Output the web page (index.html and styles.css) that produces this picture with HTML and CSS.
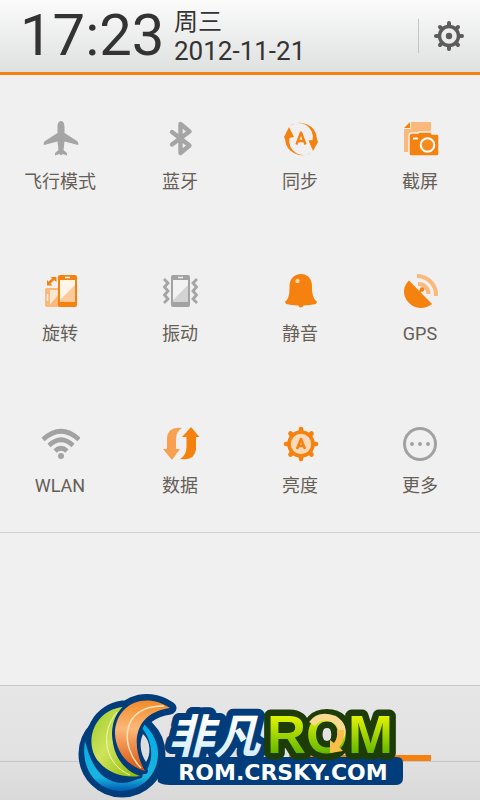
FILE: index.html
```html
<!DOCTYPE html>
<html lang="zh-CN">
<head>
    <meta charset="UTF-8">
    <meta name="viewport" content="width=device-width, initial-scale=1.0">
    <title>快捷开关</title>
    <link rel="stylesheet" href="styles.css">
</head>
<body>
    <!-- Clock bar -->
    <header class="header">
        <div class="clock">17:23</div>
        <div class="date">
            <div class="weekday">周三</div>
            <div class="day">2012-11-21</div>
        </div>
        <button class="settings" aria-label="设置">
            <svg width="30" height="30" viewBox="-15 -15 30 30">
                <g stroke="#5c5c5c" stroke-width="4" stroke-linecap="round">
                    <path d="M0-13V-10M0 13V10M-13 0H-10M13 0H10M-9-9L-7-7M9-9L7-7M-9 9L-7 7M9 9L7 7"/>
                </g>
                <circle r="9.5" fill="none" stroke="#5c5c5c" stroke-width="3.4"/>
                <circle r="3.2" fill="#5c5c5c"/>
            </svg>
        </button>
    </header>

    <!-- Toggles -->
    <main class="toggles">
        <button class="toggle">
            <svg class="icon" viewBox="0 0 40 40">
                <path fill="#a5a5a5" d="M21 2C23.500 2 24.500 5 24.500 8V14L37 22C38.500 23.500 38.700 25 38 26L24.500 22.500L23.500 31L27 34V36.500L22.500 35L21 36.500L19.500 35L15 36.500V34L18.500 31L17.500 22.500L4 26C3.300 25 3.500 23.500 5 22L17.500 14V8C17.500 5 18.500 2 21 2Z"/>
            </svg>
            <span>飞行模式</span>
        </button>
        <button class="toggle">
            <svg class="icon" viewBox="0 0 40 40">
                <path fill="none" stroke="#a5a5a5" stroke-width="4.400" stroke-linecap="round" stroke-linejoin="round" d="M12 13L29.500 26.500L20.500 34V5L29.500 12.500L12 25.500"/>
            </svg>
            <span>蓝牙</span>
        </button>
        <button class="toggle">
            <svg class="icon" viewBox="0 0 40 40">
                <g fill="#f5820f">
                    <path d="M9 8A17 17 0 0 1 37 20L38 23L33 32L28.500 21.500L32.500 21A14 14 0 0 0 9 8Z"/>
                    <path d="M33 32A17 17 0 0 1 5 20L4 18L9 8L14 18L9.500 19A14 14 0 0 0 33 32Z"/>
                </g>
                <path fill="none" stroke="#f5820f" stroke-width="2.400" stroke-linejoin="round" d="M16.500 25.500L21 13.500L25.500 25.500M18 22H24"/>
            </svg>
            <span>同步</span>
        </button>
        <button class="toggle">
            <svg class="icon" viewBox="0 0 40 40">
                <path fill="#fab87a" d="M11 3H31V14H10V33H4V10H11Z"/>
                <path fill="#f5820f" d="M4 9L10 3V9Z"/>
                <path fill="#f5820f" stroke="#f0f0f0" stroke-width="1.500" d="M9 17Q9 14 12 14H18L19 13H31L32 15H37Q39 15 39 17V35Q39 37 37 37H11Q9 37 9 35Z"/>
                <circle cx="27.500" cy="26" r="6.800" fill="#f68b20" stroke="#fff" stroke-width="2"/>
                <path stroke="#fff" stroke-width="2" d="M13 19.500H18"/>
            </svg>
            <span>截屏</span>
        </button>

        <button class="toggle">
            <svg class="icon" viewBox="0 0 40 40">
                <rect x="5" y="17" width="18" height="19" rx="2" fill="#fab87a"/>
                <path fill="#fde6d0" d="M10 19H18V34H10Z"/>
                <path fill="#fab87a" d="M18 24V34H10Z"/>
                <path stroke="#f0f0f0" stroke-width="1.500" d="M7.500 23V30"/>
                <path fill="none" stroke="#f5820f" stroke-width="2.600" d="M9 12L14 7.500"/>
                <path fill="#f5820f" d="M7 9V14.500H12.500ZM10.500 6H16.500V11Z"/>
                <rect x="18" y="4" width="19" height="32" rx="2" fill="#f5820f"/>
                <path fill="#fff4e8" d="M20 9H35V31H20Z"/>
                <path fill="#fbc99a" d="M35 14V31H20V29Z"/>
                <path stroke="#fff" stroke-width="1.500" d="M25 6.500H30"/>
            </svg>
            <span>旋转</span>
        </button>
        <button class="toggle">
            <svg class="icon" viewBox="0 0 40 40">
                <rect x="11" y="4" width="19" height="32" rx="2" fill="#a2a2a2"/>
                <path fill="#f2f2f2" d="M13 9H28V31H13Z"/>
                <path fill="#d3d3d3" d="M28 14V31H13V29Z"/>
                <path stroke="#eee" stroke-width="1.500" d="M18 6.500H23"/>
                <path fill="none" stroke="#a5a5a5" stroke-width="2.800" d="M4 8L8 12L4.500 16L8 20L4.500 24L8 28L4 32M37 8L33 12L36.500 16L33 20L36.500 24L33 28L37 32"/>
            </svg>
            <span>振动</span>
        </button>
        <button class="toggle">
            <svg class="icon" viewBox="0 0 40 40">
                <path fill="#f5820f" d="M21 3C28 3 32 8 32 15C32 23 33 28 37 30.500L36 33Q30 34 23.500 34.500Q23 36.500 20.500 36.500Q18.500 36.500 18.500 34.500Q11 34 6 33L5 30.500C9 28 9.500 23 9.500 15C9.500 8 14 3 21 3Z"/>
                <circle cx="17.500" cy="10" r="2.200" fill="#fbd3aa"/>
            </svg>
            <span>静音</span>
        </button>
        <button class="toggle">
            <svg class="icon" viewBox="0 0 40 40">
                <path fill="none" stroke="#fab87a" stroke-width="4" d="M17 5A19 19 0 0 1 36 25M18 13A10 10 0 0 1 28.500 23"/>
                <path fill="#f5820f" d="M9 9.500L32 33C24 39 14 38 8 31C2 24 3 15 9 9.500Z"/>
                <path stroke="#f5820f" stroke-width="2" d="M18 22L22 18.500"/>
                <circle cx="22" cy="18.500" r="2.200" fill="#f5820f"/>
            </svg>
            <span>GPS</span>
        </button>

        <button class="toggle">
            <svg class="icon" viewBox="0 0 40 40">
                <g fill="none" stroke="#a2a2a2" stroke-width="4.600">
                    <path d="M3 16.500Q21 0 39 16.500"/>
                    <path d="M9 22.500Q21 11 33 22.500"/>
                    <path d="M15 28Q21 22.500 27 28"/>
                </g>
                <circle cx="21" cy="33" r="3" fill="#a2a2a2"/>
            </svg>
            <span>WLAN</span>
        </button>
        <button class="toggle">
            <svg class="icon" viewBox="0 0 40 40">
                <path fill="#f8a050" d="M22 5Q8 3 7 15V26H3L12 37L20 26H16V17Q16 8 22 5Z"/>
                <path fill="#f5820f" d="M20 36Q35 38 36 26V14H39.500L31 4L22 14H26.500V24Q26.500 32 20 36Z"/>
            </svg>
            <span>数据</span>
        </button>
        <button class="toggle">
            <svg class="icon" viewBox="0 0 40 40">
                <path stroke="#f5820f" stroke-width="4.600" stroke-linecap="round" d="M21 6V36M6 21H36M10.500 10.500L31.500 31.500M31.500 10.500L10.500 31.500"/>
                <circle cx="21" cy="21" r="12" fill="#fbd9b9" stroke="#f5820f" stroke-width="3.600"/>
                <path fill="none" stroke="#f5820f" stroke-width="2.600" stroke-linejoin="round" d="M17 26L21 16L25 26M18 23H24"/>
            </svg>
            <span>亮度</span>
        </button>
        <button class="toggle">
            <svg class="icon" viewBox="0 0 40 40">
                <circle cx="20" cy="21" r="15.500" fill="none" stroke="#a2a2a2" stroke-width="3"/>
                <g fill="#a2a2a2"><circle cx="12" cy="21" r="2"/><circle cx="20" cy="21" r="2"/><circle cx="28" cy="21" r="2"/></g>
            </svg>
            <span>更多</span>
        </button>
    </main>

    <section class="notices"></section>

    <!-- Bottom tabs -->
    <footer class="footer">
        <div class="tabs">
            <div class="tab"></div>
            <div class="tab active"></div>
        </div>
        <svg class="logo" width="330" height="110" viewBox="75 690 330 110">
            <defs>
                <linearGradient id="lime" x1="0" y1="0" x2="0" y2="1">
                    <stop offset="0.150" stop-color="#ecf800"/>
                    <stop offset="0.850" stop-color="#5cb400"/>
                </linearGradient>
                <linearGradient id="ice" x1="0" y1="0" x2="0" y2="1">
                    <stop offset="0.300" stop-color="#fff"/>
                    <stop offset="1" stop-color="#c8e8fa"/>
                </linearGradient>
                <linearGradient id="leaf" x1="0" y1="0" x2="1" y2="1">
                    <stop offset="0" stop-color="#9ccb2c"/>
                    <stop offset="0.450" stop-color="#cfe35a"/>
                    <stop offset="1" stop-color="#88b800"/>
                </linearGradient>
                <linearGradient id="flame" x1="0" y1="0" x2="0" y2="1">
                    <stop offset="0" stop-color="#f28a28"/>
                    <stop offset="0.400" stop-color="#fbb878"/>
                    <stop offset="1" stop-color="#d9500a"/>
                </linearGradient>
                <linearGradient id="sea" x1="0" y1="0" x2="0" y2="1">
                    <stop offset="0" stop-color="#00aeea"/>
                    <stop offset="0.800" stop-color="#19b4e0"/>
                    <stop offset="1" stop-color="#0058b0"/>
                </linearGradient>
            </defs>
            <!-- plate behind the address -->
            <path fill="#003d7a" d="M166 757H397Q403 757 403 763V778Q403 785 396 785H170Q162 785 158 782L155 760Z"/>
            <!-- swirl -->
            <g fill="#003d7a" stroke="#003d7a" stroke-width="13" stroke-linejoin="round">
                <circle cx="122" cy="754" r="37"/>
                <path d="M123 707C98 711 87 735 94 754C101 773 122 780 140 776Z"/>
                <path d="M170 708C145 691 115 704 115 733C116 753 128 766 144 771C131 748 130 714 170 708Z"/>
            </g>
            <path fill="#dedede" d="M143 734C151 741 151 755 146 762C140 753 139 742 143 734Z"/>
            <path fill="url(#sea)" d="M85 741C80 772 99 791 122 791C154 790 173 750 143 723L141 727C158 745 155 782 122 783C101 782 91 765 85 741Z"/>
            <path fill="url(#leaf)" stroke="#003d7a" stroke-width="5" stroke-linejoin="round" paint-order="stroke" d="M123 707C93 710 83 744 99 762C110 775 127 778 140 776C108 765 106 724 123 707Z"/>
            <path fill="none" stroke="#f2f8b8" d="M117 712C99 733 105 765 130 775"/>
            <path fill="url(#flame)" stroke="#003d7a" stroke-width="6" stroke-linejoin="round" paint-order="stroke" d="M170 708C145 691 115 704 115 734C116 754 130 767 145 771C131 747 132 713 170 708Z"/>
            <path fill="none" stroke="#ffe3bb" stroke-width="1.500" d="M164 706C121 705 119 746 141 768"/>
            <!-- wordmark -->
            <text class="logo-cn" x="168" y="753">非凡</text>
            <text class="logo-rom" x="267" y="753">ROM</text>
            <path fill="none" stroke="#fad990" stroke-width="7" d="M312 724Q319 714 334 719Q345 726 341 737"/>
            <path fill="#f8c04a" d="M344 730Q345 741 339 747L343 751L330 753V740L334 743Q338 738 337 730Z"/>
            <text class="logo-url" x="283" y="780">ROM.CRSKY.COM</text>
        </svg>
    </footer>
</body>
</html>
```
FILE: styles.css
```css
* {
    box-sizing: border-box;
}
body {
    margin: 0;
    min-height: 100vh;
    display: flex;
    flex-direction: column;
    background-color: #f0f0f0;
    font-family: Roboto, "Noto Sans CJK SC", sans-serif;
    color: #333;
}
button {
    border: none;
    padding: 0;
    background: none;
    font-family: inherit;
    cursor: pointer;
}
.header {
    display: flex;
    align-items: center;
    height: 75px;
    padding-left: 20px;
    border-bottom: 3px solid #f5820f;
    background: linear-gradient(#fbfbfb, #dfe0e0);
}
.clock {
    width: 154px;
    font-size: 58px;
    line-height: 68px;
    padding-bottom: 2px;
}
.weekday {
    font-size: 24px;
    line-height: 30px;
}
.day {
    font-size: 26px;
    line-height: 28px;
}
.settings {
    display: flex;
    align-items: center;
    height: 34px;
    margin-left: auto;
    padding: 0 16px 0 15px;
    border-left: 1px solid #c4c4c4;
}
.toggles {
    display: grid;
    grid-template-columns: repeat(4, 1fr);
    grid-auto-rows: 152px;
    padding-bottom: 1px;
    border-bottom: 1px solid #d2d2d2;
}
.toggle {
    display: flex;
    flex-direction: column;
    align-items: center;
    gap: 11px;
    padding-top: 44px;
    color: #665e57;
    font-size: 18px;
    line-height: 24px;
}
.icon {
    width: 40px;
    height: 40px;
}
.notices {
    flex: 1;
}
.footer {
    position: relative;
    height: 115px;
    border-top: 1px solid #c8cacb;
    background: linear-gradient(#e6e6e6, #e2e2e2 60%, #d9d9d9);
}
.tabs {
    display: flex;
    height: 76px;
    border-bottom: 1px solid #c6c6c6;
}
.tab {
    display: flex;
    flex: 1;
    align-items: flex-end;
    justify-content: center;
}
.tab.active::after {
    content: "";
    width: 142px;
    height: 6px;
    background-color: #f5820f;
}
.logo {
    position: absolute;
    left: 75px;
    bottom: 0;
}
.logo text {
    paint-order: stroke;
    stroke-linejoin: round;
}
.logo-cn {
    font-family: "Noto Sans CJK SC", sans-serif;
    font-size: 46px;
    font-weight: bold;
    font-style: italic;
    fill: url(#ice);
    stroke: #003d7a;
    stroke-width: 14px;
}
.logo-rom {
    font-family: "Liberation Sans", sans-serif;
    font-size: 54px;
    font-weight: bold;
    fill: url(#lime);
    stroke: #1d3c08;
    stroke-width: 13px;
}
.logo-url {
    font-family: "DejaVu Sans", sans-serif;
    font-size: 22px;
    font-weight: bold;
    text-anchor: middle;
    fill: #fff;
}
```
